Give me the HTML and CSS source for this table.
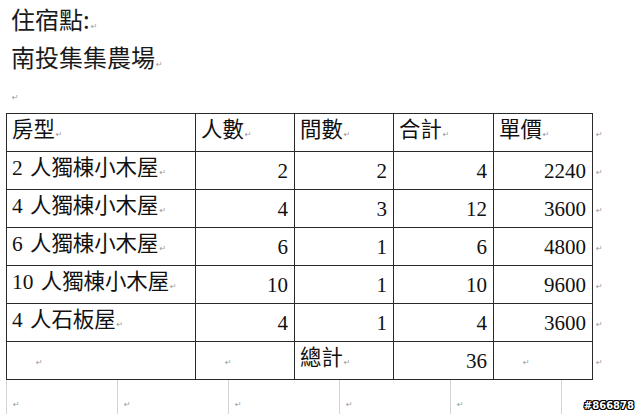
FILE: index.html
```html
<!DOCTYPE html>
<html lang="zh-Hant">
<head>
<meta charset="utf-8">
<title>住宿點</title>
<link rel="stylesheet" href="styles.css">
</head>
<body>
<div class="doc">
  <p class="title">住宿點:<span class="pm">↵</span></p>
  <p class="title">南投集集農場<span class="pm">↵</span></p>
  <p class="blank"><span class="pm">↵</span></p>
  <table class="rooms">
    <colgroup>
      <col class="c-type"><col class="c-num"><col class="c-num"><col class="c-num4"><col class="c-num"><col class="c-end">
    </colgroup>
    <tr>
      <td class="txt">房型<span class="pm">↵</span></td>
      <td class="txt">人數<span class="pm">↵</span></td>
      <td class="txt">間數<span class="pm">↵</span></td>
      <td class="txt">合計<span class="pm">↵</span></td>
      <td class="txt">單價<span class="pm">↵</span></td>
      <td class="rowend"><span class="pm">↵</span></td>
    </tr>
    <tr>
      <td class="txt">2 人獨棟小木屋<span class="pm">↵</span></td>
      <td class="num">2</td><td class="num">2</td><td class="num">4</td><td class="num">2240</td>
      <td class="rowend"><span class="pm">↵</span></td>
    </tr>
    <tr>
      <td class="txt">4 人獨棟小木屋<span class="pm">↵</span></td>
      <td class="num">4</td><td class="num">3</td><td class="num">12</td><td class="num">3600</td>
      <td class="rowend"><span class="pm">↵</span></td>
    </tr>
    <tr>
      <td class="txt">6 人獨棟小木屋<span class="pm">↵</span></td>
      <td class="num">6</td><td class="num">1</td><td class="num">6</td><td class="num">4800</td>
      <td class="rowend"><span class="pm">↵</span></td>
    </tr>
    <tr>
      <td class="txt">10 人獨棟小木屋<span class="pm">↵</span></td>
      <td class="num">10</td><td class="num">1</td><td class="num">10</td><td class="num">9600</td>
      <td class="rowend"><span class="pm">↵</span></td>
    </tr>
    <tr>
      <td class="txt">4 人石板屋<span class="pm">↵</span></td>
      <td class="num">4</td><td class="num">1</td><td class="num">4</td><td class="num">3600</td>
      <td class="rowend"><span class="pm">↵</span></td>
    </tr>
    <tr>
      <td class="empty"><span class="pm">↵</span></td>
      <td class="empty"><span class="pm">↵</span></td>
      <td class="txt">總計<span class="pm">↵</span></td>
      <td class="num">36</td>
      <td class="empty"><span class="pm">↵</span></td>
      <td class="rowend"><span class="pm">↵</span></td>
    </tr>
  </table>
  <div class="grid-below">
    <div class="gcell"><span class="pm">↵</span></div>
    <div class="gcell"><span class="pm">↵</span></div>
    <div class="gcell"><span class="pm">↵</span></div>
    <div class="gcell"><span class="pm">↵</span></div>
    <div class="gcell last"><span class="pm">↵</span></div>
  </div>
</div>
<div class="tag">#866878</div>
</body>
</html>
```
FILE: styles.css
```css
html, body {
  margin: 0;
  padding: 0;
  background: #ffffff;
}
body {
  width: 640px;
  height: 414px;
  overflow: hidden;
  position: relative;
  font-family: "Liberation Serif", "Noto Sans CJK TC", serif;
  color: #111;
}
.doc {
  padding-left: 6px;
}
.title {
  margin: 0;
  padding-left: 5px;
  height: 38px;
  line-height: 38px;
  font-family: "Noto Sans CJK TC", sans-serif;
  font-size: 24px;
  color: #1a1a1a;
}
.blank {
  margin: 0;
  height: 37px;
  line-height: 37px;
  padding-left: 5px;
}
.pm {
  font-family: "DejaVu Sans", sans-serif;
  font-size: 8px;
  color: #9a9a9a;
  margin-left: 1px;
  vertical-align: baseline;
}
.rooms {
  border-collapse: collapse;
  table-layout: fixed;
  width: 608px;
}
.c-type { width: 189px; }
.c-num { width: 99px; }
.c-num4 { width: 100px; }
.c-end { width: 22px; }
.rooms tr {
  height: 38px;
}
.rooms td {
  border: 1px solid #2a2a2a;
  padding: 0 6px 0 5px;
  font-size: 21.4px;
  line-height: 24px;
  vertical-align: middle;
  white-space: nowrap;
  overflow: hidden;
}
.rooms td.txt {
  text-align: left;
  word-spacing: 2px;
}
.rooms td.num {
  text-align: right;
  font-size: 21px;
}
.rooms td.empty {
  padding-left: 28px;
}
.rooms td.rowend {
  border: none;
  padding: 0 0 0 2px;
}
.grid-below {
  display: flex;
  height: 40px;
}
.gcell {
  width: 111px;
  border-left: 1px solid #d4d4d4;
  padding: 15px 0 0 5px;
  box-sizing: border-box;
  line-height: 14px;
}
.gcell.last {
  border-right: 1px solid #d4d4d4;
  width: 112px;
}
.tag {
  position: absolute;
  right: 6px;
  bottom: 3px;
  font-family: "DejaVu Sans", sans-serif;
  font-weight: bold;
  font-size: 10px;
  line-height: 11px;
  color: #ffffff;
  text-shadow: 1px 0 0 #000, -1px 0 0 #000, 0 1px 0 #000, 0 -1px 0 #000, 1px 1px 0 #000, -1px -1px 0 #000, 1px -1px 0 #000, -1px 1px 0 #000;
}
```
